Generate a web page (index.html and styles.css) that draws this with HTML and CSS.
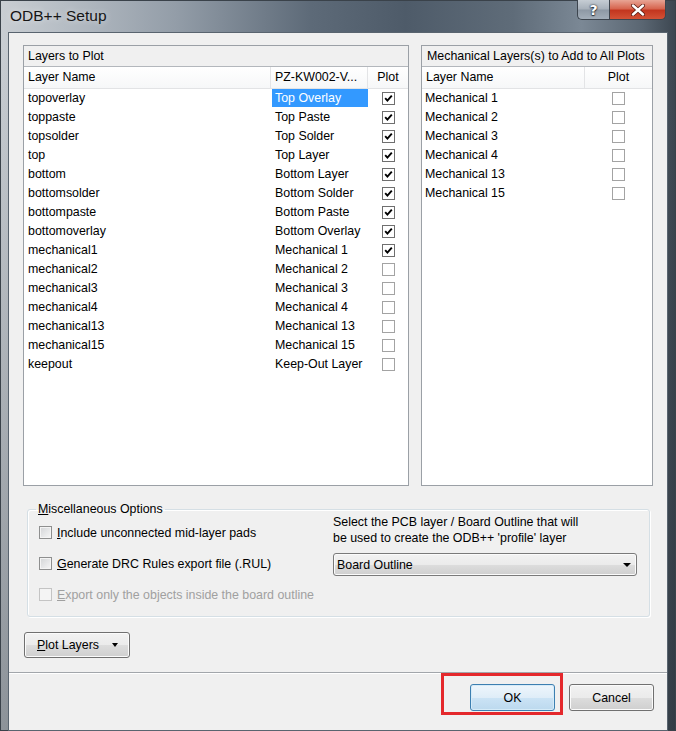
FILE: index.html
```html
<!DOCTYPE html>
<html>
<head>
<meta charset="utf-8">
<title>ODB++ Setup</title>
<link rel="stylesheet" href="styles.css">
</head>
<body>
<div class="window">
  <div class="titlebar">
    <span class="title">ODB++ Setup</span>
    <div class="caption-btns">
      <div class="cap help"><span class="qmark">?</span></div>
      <div class="cap close">
        <svg width="14" height="12" viewBox="0 0 14 12"><path d="M2 1.5 L12 10.5 M12 1.5 L2 10.5" stroke="#5a1a10" stroke-width="4" stroke-linecap="round"/><path d="M2 1.5 L12 10.5 M12 1.5 L2 10.5" stroke="#ffffff" stroke-width="2.4" stroke-linecap="round"/></svg>
      </div>
    </div>
  </div>

  <div class="client">
    <div class="main">
      <div class="lists">
        <div class="panel panel-left">
          <div class="panel-title">Layers to Plot</div>
          <div class="head cols-left">
            <div class="hcell">Layer Name</div>
            <div class="hcell">PZ-KW002-V...</div>
            <div class="hcell center">Plot</div>
          </div>
          <div class="row cols-left"><div class="cell">topoverlay</div><div class="cell2"><span class="sel">Top Overlay</span></div><div class="chkcell"><span class="chk on"><svg width="11" height="11" viewBox="0 0 11 11"><path d="M2.2 5.2 L4.4 7.6 L8.8 2.6" fill="none" stroke="#000" stroke-width="1.9"/></svg></span></div></div>
          <div class="row cols-left"><div class="cell">toppaste</div><div class="cell2"><span class="val">Top Paste</span></div><div class="chkcell"><span class="chk on"><svg width="11" height="11" viewBox="0 0 11 11"><path d="M2.2 5.2 L4.4 7.6 L8.8 2.6" fill="none" stroke="#000" stroke-width="1.9"/></svg></span></div></div>
          <div class="row cols-left"><div class="cell">topsolder</div><div class="cell2"><span class="val">Top Solder</span></div><div class="chkcell"><span class="chk on"><svg width="11" height="11" viewBox="0 0 11 11"><path d="M2.2 5.2 L4.4 7.6 L8.8 2.6" fill="none" stroke="#000" stroke-width="1.9"/></svg></span></div></div>
          <div class="row cols-left"><div class="cell">top</div><div class="cell2"><span class="val">Top Layer</span></div><div class="chkcell"><span class="chk on"><svg width="11" height="11" viewBox="0 0 11 11"><path d="M2.2 5.2 L4.4 7.6 L8.8 2.6" fill="none" stroke="#000" stroke-width="1.9"/></svg></span></div></div>
          <div class="row cols-left"><div class="cell">bottom</div><div class="cell2"><span class="val">Bottom Layer</span></div><div class="chkcell"><span class="chk on"><svg width="11" height="11" viewBox="0 0 11 11"><path d="M2.2 5.2 L4.4 7.6 L8.8 2.6" fill="none" stroke="#000" stroke-width="1.9"/></svg></span></div></div>
          <div class="row cols-left"><div class="cell">bottomsolder</div><div class="cell2"><span class="val">Bottom Solder</span></div><div class="chkcell"><span class="chk on"><svg width="11" height="11" viewBox="0 0 11 11"><path d="M2.2 5.2 L4.4 7.6 L8.8 2.6" fill="none" stroke="#000" stroke-width="1.9"/></svg></span></div></div>
          <div class="row cols-left"><div class="cell">bottompaste</div><div class="cell2"><span class="val">Bottom Paste</span></div><div class="chkcell"><span class="chk on"><svg width="11" height="11" viewBox="0 0 11 11"><path d="M2.2 5.2 L4.4 7.6 L8.8 2.6" fill="none" stroke="#000" stroke-width="1.9"/></svg></span></div></div>
          <div class="row cols-left"><div class="cell">bottomoverlay</div><div class="cell2"><span class="val">Bottom Overlay</span></div><div class="chkcell"><span class="chk on"><svg width="11" height="11" viewBox="0 0 11 11"><path d="M2.2 5.2 L4.4 7.6 L8.8 2.6" fill="none" stroke="#000" stroke-width="1.9"/></svg></span></div></div>
          <div class="row cols-left"><div class="cell">mechanical1</div><div class="cell2"><span class="val">Mechanical 1</span></div><div class="chkcell"><span class="chk on"><svg width="11" height="11" viewBox="0 0 11 11"><path d="M2.2 5.2 L4.4 7.6 L8.8 2.6" fill="none" stroke="#000" stroke-width="1.9"/></svg></span></div></div>
          <div class="row cols-left"><div class="cell">mechanical2</div><div class="cell2"><span class="val">Mechanical 2</span></div><div class="chkcell"><span class="chk"></span></div></div>
          <div class="row cols-left"><div class="cell">mechanical3</div><div class="cell2"><span class="val">Mechanical 3</span></div><div class="chkcell"><span class="chk"></span></div></div>
          <div class="row cols-left"><div class="cell">mechanical4</div><div class="cell2"><span class="val">Mechanical 4</span></div><div class="chkcell"><span class="chk"></span></div></div>
          <div class="row cols-left"><div class="cell">mechanical13</div><div class="cell2"><span class="val">Mechanical 13</span></div><div class="chkcell"><span class="chk"></span></div></div>
          <div class="row cols-left"><div class="cell">mechanical15</div><div class="cell2"><span class="val">Mechanical 15</span></div><div class="chkcell"><span class="chk"></span></div></div>
          <div class="row cols-left"><div class="cell">keepout</div><div class="cell2"><span class="val">Keep-Out Layer</span></div><div class="chkcell"><span class="chk"></span></div></div>
        </div>

        <div class="panel panel-right">
          <div class="panel-title title-right">Mechanical Layers(s) to Add to All Plots</div>
          <div class="head cols-right">
            <div class="hcell">Layer Name</div>
            <div class="hcell center">Plot</div>
          </div>
          <div class="row cols-right"><div class="cell">Mechanical 1</div><div class="chkcell"><span class="chk"></span></div></div>
          <div class="row cols-right"><div class="cell">Mechanical 2</div><div class="chkcell"><span class="chk"></span></div></div>
          <div class="row cols-right"><div class="cell">Mechanical 3</div><div class="chkcell"><span class="chk"></span></div></div>
          <div class="row cols-right"><div class="cell">Mechanical 4</div><div class="chkcell"><span class="chk"></span></div></div>
          <div class="row cols-right"><div class="cell">Mechanical 13</div><div class="chkcell"><span class="chk"></span></div></div>
          <div class="row cols-right"><div class="cell">Mechanical 15</div><div class="chkcell"><span class="chk"></span></div></div>
        </div>
      </div>

      <fieldset class="misc">
        <legend><u>M</u>iscellaneous Options</legend>
        <div class="misc-body">
          <div class="misc-left">
            <div class="opt"><span class="wcb"></span><span><u>I</u>nclude unconnected mid-layer pads</span></div>
            <div class="opt"><span class="wcb"></span><span><u>G</u>enerate DRC Rules export file (.RUL)</span></div>
            <div class="opt disabled"><span class="wcb"></span><span><u>E</u>xport only the objects inside the board outline</span></div>
          </div>
          <div class="misc-right">
            <p class="note">Select the PCB layer / Board Outline that will<br>be used to create the ODB++ 'profile' layer</p>
            <div class="combo"><span>Board Outline</span><span class="tri"></span></div>
          </div>
        </div>
      </fieldset>

      <div class="btn plot-btn"><span><u>P</u>lot Layers</span><span class="tri"></span></div>
    </div>

    <div class="footer">
      <div class="btn ok">OK</div>
      <div class="btn">Cancel</div>
      <div class="mark"></div>
    </div>
  </div>
</div>
</body>
</html>
```

FILE: styles.css
```css
html, body {
  margin: 0;
  padding: 0;
}
body {
  background: #4f5b67;
  font-family: "Liberation Sans", Arial, sans-serif;
  font-size: 12.4px;
  color: #000;
}
.window {
  width: 676px;
  height: 731px;
  display: flex;
  flex-direction: column;
  position: relative;
  overflow: hidden;
  background:
    linear-gradient(to bottom, rgba(30, 38, 46, 0) 0%, rgba(30, 38, 46, 0) 6%, rgba(30, 38, 46, 0.35) 100%),
    linear-gradient(to right, #c9ced3 0%, #b7bec5 9%, #939da8 26%, #5d6a78 46%, #4e5b69 60%, #5f6c79 76%, #7b8895 86%, #5a6672 95%, #3c4650 100%);
  box-shadow: inset 0 0 0 1px #3a424a;
}
.titlebar {
  height: 32px;
  flex: 0 0 32px;
  display: flex;
  justify-content: space-between;
  align-items: flex-start;
}
.title {
  margin: 6px 0 0 10px;
  font-size: 15.5px;
  line-height: 19px;
  color: #151515;
  text-shadow: 0 0 6px rgba(255, 255, 255, 0.6);
}
.caption-btns {
  display: flex;
  margin-right: 10px;
}
.cap {
  height: 20px;
  box-sizing: border-box;
  display: flex;
  align-items: center;
  justify-content: center;
  border: 1px solid #3d454e;
  border-top: none;
}
.cap.help {
  width: 32px;
  border-right: none;
  border-radius: 0 0 0 5px;
  background: linear-gradient(#c6cdd4 0%, #a7b0ba 48%, #8d98a4 52%, #a3aeb9 100%);
}
.qmark {
  color: #ffffff;
  font-family: "DejaVu Sans", sans-serif;
  font-weight: bold;
  font-size: 14px;
  line-height: 16px;
  text-shadow: 0 0 1px #2b333c, 0 1px 1px #2b333c, 0 0 2px #2b333c;
}
.cap.close {
  width: 57px;
  border-radius: 0 0 5px 0;
  background: linear-gradient(#e8a595 0%, #d76650 45%, #c3361f 55%, #d35236 100%);
}
.client {
  flex: 1;
  margin: 0 8px 10px 8px;
  background: #f0f0f0;
  border: 1px solid #59646f;
  display: flex;
  flex-direction: column;
}
.main {
  flex: 1;
  padding: 12px 14px 0 14px;
  display: flex;
  flex-direction: column;
}
.lists {
  display: flex;
  gap: 12px;
  height: 441px;
  flex: 0 0 441px;
}
.panel {
  box-sizing: border-box;
  border: 1px solid #9ba0a6;
  background: #fff;
  display: flex;
  flex-direction: column;
}
.panel-left { width: 386px; }
.panel-right { width: 232px; }
.panel-title {
  height: 20px;
  line-height: 20px;
  background: #f0f0f0;
  border-bottom: 1px solid #b3b7bc;
  padding-left: 4px;
  white-space: nowrap;
}
.title-right { padding-left: 5px; }
.head {
  height: 21px;
  display: grid;
  border-bottom: 1px solid #e2e3e5;
  background: linear-gradient(#ffffff, #f6f7f8);
}
.cols-left { grid-template-columns: 247px 97px 40px; }
.cols-right { grid-template-columns: 163px 67px; }
.hcell {
  line-height: 21px;
  padding-left: 4px;
  border-right: 1px solid #e3e4e6;
  white-space: nowrap;
  overflow: hidden;
}
.hcell:last-child { border-right: none; }
.hcell.center {
  padding-left: 0;
  text-align: center;
}
.row {
  height: 19px;
  display: grid;
  align-items: start;
}
.cell {
  line-height: 18px;
  padding-left: 4px;
  white-space: nowrap;
}
.panel-right .cell { padding-left: 3px; }
.cell2 {
  padding-left: 1px;
}
.sel, .val {
  display: block;
  height: 18px;
  line-height: 18px;
  padding-left: 3px;
  white-space: nowrap;
}
.sel {
  background: #3399ff;
  color: #fff;
}
.chkcell {
  display: flex;
  justify-content: center;
  padding-top: 3px;
}
.chk {
  width: 13px;
  height: 13px;
  box-sizing: border-box;
  border: 1px solid #a3a3a3;
  background: #fff;
  display: flex;
  align-items: center;
  justify-content: center;
}
.chk.on {
  border-color: #6f6f6f;
}
.chk svg { display: block; }

.misc {
  margin: 16px 3px 0 4px;
  padding: 0 12px 6px 11px;
  border: 1px solid #d5dfe5;
  border-radius: 3px;
  box-shadow: inset 1px 1px 0 #fff, 1px 1px 0 #fff;
  min-width: 0;
}
.misc legend {
  padding: 0 2px;
  margin-left: -3px;
  line-height: 14px;
}
.misc-body {
  display: grid;
  grid-template-columns: 294px 1fr;
  padding-top: 1px;
}
.opt {
  height: 31px;
  display: flex;
  align-items: center;
  gap: 5px;
  white-space: nowrap;
}
.wcb {
  width: 13px;
  height: 13px;
  box-sizing: border-box;
  border: 1px solid #8e8f8f;
  background: linear-gradient(135deg, #d2d4d6 0%, #e8e9ea 60%, #f6f6f6 100%);
  box-shadow: inset 0 0 0 1px #f4f4f4;
}
.opt.disabled { color: #a0a0a0; }
.opt.disabled .wcb {
  border-color: #c4c4c4;
  background: #f4f4f4;
  box-shadow: none;
}
.misc-right {
  margin-top: -3px;
}
.note {
  margin: 0;
  line-height: 16px;
  white-space: nowrap;
}
.combo {
  margin-top: 7px;
  width: 304px;
  height: 23px;
  box-sizing: border-box;
  border: 1px solid #7a7a7a;
  border-radius: 3px;
  background: linear-gradient(#f2f2f2 0%, #ebebeb 50%, #dddddd 51%, #cfcfcf 100%);
  box-shadow: inset 0 0 0 1px #fbfbfb;
  display: flex;
  align-items: center;
  justify-content: space-between;
  padding: 0 3px 0 3px;
}
.combo .tri { margin-right: 2px; }
.tri {
  width: 0;
  height: 0;
  border-left: 4px solid transparent;
  border-right: 4px solid transparent;
  border-top: 4px solid #000;
}
.btn {
  box-sizing: border-box;
  height: 27px;
  border: 1px solid #707070;
  border-radius: 3px;
  background: linear-gradient(#f2f2f2 0%, #ebebeb 50%, #dddddd 51%, #cfcfcf 100%);
  box-shadow: inset 0 0 0 1px #fbfbfb;
  display: flex;
  align-items: center;
  justify-content: center;
  width: 85px;
}
.plot-btn {
  margin: 15px 0 14px 1px;
  width: 106px;
  height: 26px;
  gap: 13px;
  padding-left: 1px;
}
.plot-btn .tri {
  border-left-width: 3.5px;
  border-right-width: 3.5px;
}
.footer {
  position: relative;
  height: 46px;
  flex: 0 0 46px;
  border-top: 1px solid #a2a6ab;
  box-shadow: inset 0 1px 0 #ffffff;
  display: flex;
  justify-content: flex-end;
  align-items: flex-start;
  gap: 14px;
  padding: 11px 13px 0 0;
}
.btn.ok {
  border-color: #3c7fb1;
  background: linear-gradient(#eef6fc 0%, #dfedf8 50%, #cbe3f5 51%, #bcd9ee 100%);
  box-shadow: inset 0 0 0 1px #d6ebf8;
}
.mark {
  position: absolute;
  left: 432px;
  top: 0;
  width: 122px;
  height: 42px;
  box-sizing: border-box;
  border: 3px solid #e4282c;
}
```
